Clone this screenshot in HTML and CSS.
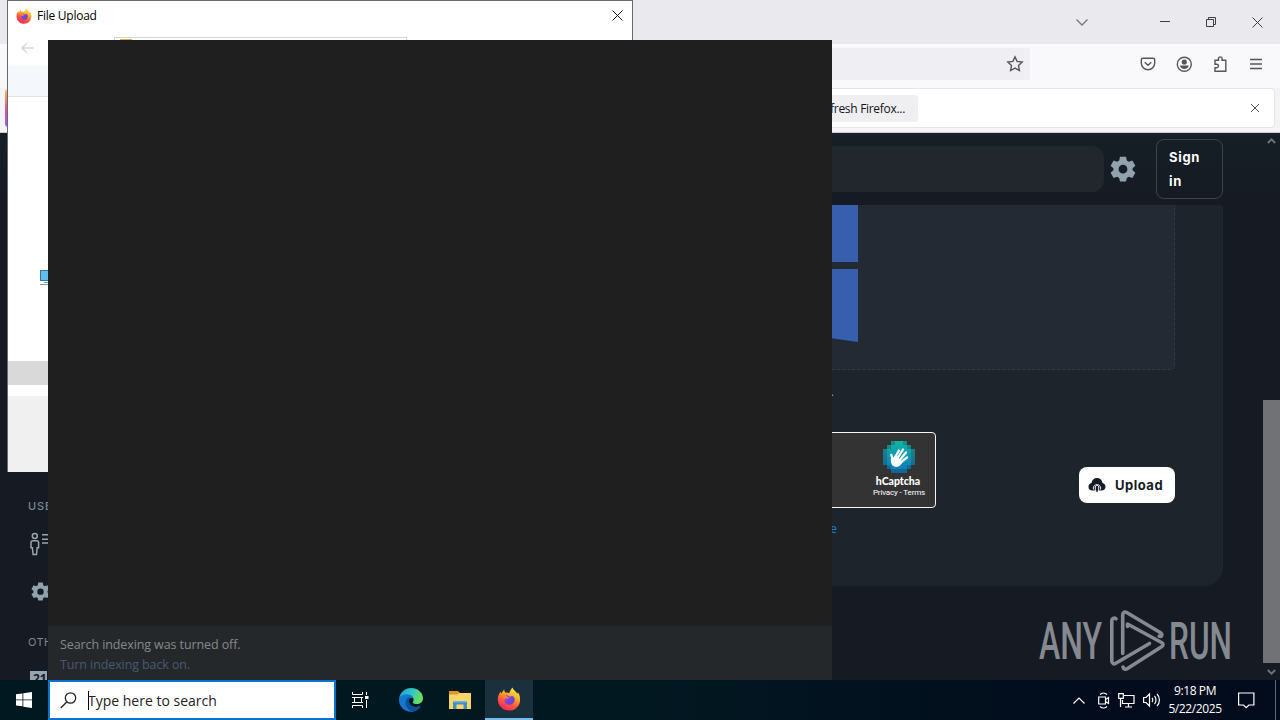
FILE: index.html
```html
<!DOCTYPE html>
<html lang="en">
<head>
  <meta charset="UTF-8">
  <meta name="viewport" content="width=device-width, initial-scale=1.0">
  <title>File Upload</title>
  <link rel="stylesheet" href="styles.css">
</head>
<body>
  <!-- shared shapes -->
  <svg class="defs" width="0" height="0">
    <defs>
      <linearGradient id="fx-body" x1=".8" y1="0" x2=".3" y2="1">
        <stop offset="0" stop-color="#fff04a"/><stop offset=".35" stop-color="#ffb02c"/>
        <stop offset=".65" stop-color="#ff5a35"/><stop offset="1" stop-color="#f0246c"/>
      </linearGradient>
      <linearGradient id="fx-globe" x1="0" y1="0" x2="1" y2="1">
        <stop offset="0" stop-color="#a347ea"/><stop offset="1" stop-color="#5145c8"/>
      </linearGradient>
      <linearGradient id="edge-top" x1="0" y1="0" x2="1" y2=".3">
        <stop offset="0" stop-color="#1f9bdc"/><stop offset=".55" stop-color="#2fc5c8"/><stop offset="1" stop-color="#6be05c"/>
      </linearGradient>
      <linearGradient id="captcha" x1="0" y1="0" x2="0" y2="1">
        <stop offset="0" stop-color="#10b5a2"/><stop offset="1" stop-color="#0877c3"/>
      </linearGradient>
      <symbol id="firefox" viewBox="0 0 24 24">
        <path fill="url(#fx-body)" d="M15.500.6c.5 1.500 1.400 2.600 2.600 3.500 1 .8 1.700 1.800 2 2.700l1-1.200c1.300 2 2 4.300 2 6.800C23.100 19 18.300 23.600 12 23.600S.8 18.700.8 12.300c0-3.100 1.100-5.600 2.800-7.600l.6 1.900 2.900-4 .9 3c1.500-.4 3-.2 4.200.6.9-2 1.700-4 3.300-5.600z"/>
        <path fill="url(#fx-globe)" d="M8.200 8.400c2-.4 3.600.3 4.700 1.400 1.800-1.200 2.700-1 4.200.4 1.500 3.300-.4 7.600-4.400 7.600-3.700 0-5.800-3-4.900-5.900.7-.4 2.400-.2 3.500-.6l1-1c-1.500-.1-2.500-1.300-4.100-1.900z"/>
      </symbol>
      <symbol id="gear" viewBox="0 0 26 26">
        <path fill="#91a1ae" fill-rule="evenodd" d="M10 .8h6l.8 3.700 2 1.200 3.600-1.200 3 5.200-2.800 2.500v2l2.800 2.500-3 5.200-3.600-1.200-2 1.200-.8 3.500h-6l-.8-3.500-2-1.200-3.600 1.200-3-5.200 2.800-2.500v-2L.6 9.700l3-5.200 3.600 1.200 2-1.200zM13 8.800a4.400 4.400 0 1 0 0 8.800 4.400 4.400 0 0 0 0-8.800z"/>
      </symbol>
    </defs>
  </svg>

  <div class="desktop">
    <div class="browser">
      <div class="titlebar">
        <svg class="tabs-arrow" width="12" height="8"><path d="M.5 1.500 6 7l5.500-5.500"/></svg>
        <svg class="min" width="10" height="10"><path d="M0 4.500h10"/></svg>
        <svg class="restore" width="10" height="10"><path d="M.5 2.500h7v7h-7zM2.500 2.500v-2h7v7h-2"/></svg>
        <svg class="close" width="11" height="11"><path d="M.5.5l10 10M10.500.5l-10 10"/></svg>
      </div>
      <div class="toolbar">
        <div class="urlbar">
          <svg width="16" height="16"><path d="M8 .9 10.100 5.400 15.200 6 11.500 9.500l.9 5L8 12.100l-4.400 2.400.9-5L.8 6l5.100-.6z"/></svg>
        </div>
        <svg width="16" height="16"><path d="M3 2.200h10c1 0 1.700.7 1.700 1.700V7c0 3.700-3 6.700-6.700 6.700S1.300 10.700 1.300 7V3.900c0-1 .7-1.700 1.700-1.700zM4.700 6.200 8 9.300l3.300-3.100"/></svg>
        <svg width="16" height="16"><circle cx="8.300" cy="8.300" r="7"/><circle class="solid" cx="8.300" cy="6" r="2.600"/><path class="solid" d="M3.900 9.500h8.800c-.3 2.300-2.200 3.500-4.400 3.500s-4.100-1.200-4.400-3.500z"/></svg>
        <svg width="16" height="16"><path d="M3 4.300h3.500V2.600c0-2.300 3.600-2.300 3.600 0v1.700h3.700v10.900H3v-3.400h1.700c2.300 0 2.300-3.500 0-3.500H3z"/></svg>
        <svg width="16" height="16"><path d="M2 3.500h12M2 8h12M2 12.500h12"/></svg>
      </div>
      <div class="infobar">
        <div class="notice">
          <button class="refresh">Refresh Firefox...</button>
          <svg width="8" height="8"><path d="M0 0l8 8M8 0 0 8"/></svg>
        </div>
      </div>

      <div class="page">
        <nav class="sidebar">
          <span class="group">USE</span>
          <svg width="22" height="24"><circle cx="6.800" cy="4" r="2.500"/><path d="M5 8.800h3.600c1.400 0 2 .9 2 2v5H9.200L8.500 22.500H5.100l-.7-6.700H3v-5c0-1.100.6-2 2-2zM14 2.700h8M14 7.200h8M14 11h8"/></svg>
          <svg class="side-gear" width="19" height="19"><use href="#gear"/></svg>
          <span class="group other">OTH</span>
          <span class="badge">21</span>
        </nav>
        <main class="main">
          <header class="site-header">
            <div class="site-search"></div>
            <svg width="26" height="26"><use href="#gear"/></svg>
            <button class="sign-in">Sign<br>in</button>
          </header>
          <section class="panel">
            <div class="dropzone">
              <svg width="118" height="138"><path fill="#385fae" d="M0 0h118v57H0zM0 64h118v73L0 120z"/></svg>
            </div>
            <div class="form-row">
              <div class="fields">
                <p class="hint">.</p>
                <div class="captcha">
                  <div class="captcha-brand">
                    <svg width="32" height="32" shape-rendering="crispEdges">
                      <path fill="url(#captcha)" d="M8 0h16v4h4v4h4v16h-4v4h-4v4H8v-4H4v-4H0V8h4V4h4z"/>
                      <path fill="#333" opacity=".3" d="M0 8h4v16H0zM4 4h4v4H4zM8 0h4v4H8zM20 0h4v4h-4zM24 4h4v4h-4zM28 8h4v16h-4zM24 24h4v4h-4zM8 28h16v4H8zM4 24h4v4H4z"/>
                      <path shape-rendering="auto" fill="none" stroke="#fff" stroke-width="2.300" stroke-linecap="round" d="M9.500 18 8.300 13.800M11.500 17l4.500-7.500M14 18l6-9.500M16 20l7-8.500M17 22l7-5.500"/>
                      <path shape-rendering="auto" fill="#fff" d="M8 15.500l3 1 3-2 5.500 7-2.500 3c-2.500 2.200-6 1.800-8-.7-1.500-2.100-1.200-5.300-1-8.300z"/>
                    </svg>
                    <b>hCaptcha</b>
                    <small>Privacy - Terms</small>
                  </div>
                </div>
                <a class="more">e</a>
              </div>
              <button class="upload">
                <svg width="18" height="16"><path fill="#141c26" d="M4.500 13.500C2 13.500.5 11.900.5 9.800c0-2 1.300-3.400 3-3.700C3.800 3 6 1 9 1s5.200 2 5.500 5.100c1.700.3 3 1.700 3 3.700 0 2.100-1.500 3.700-4 3.700z"/><path stroke="#fff" stroke-width=".9" d="M5.500 12.500c-1.500-6.500 8.500-6.500 7 0M7.300 14V9.500M10.700 14V9.500"/><path stroke="#141c26" stroke-width="1.300" d="M9 8.500V15"/><path stroke="#fff" stroke-width=".8" d="M6.800 10.200 9 8l2.200 2.200"/></svg>
                Upload
              </button>
            </div>
          </section>
        </main>
        <div class="scrollbar">
          <svg width="9" height="6"><path d="M.8 5 4.500 1.300 8.200 5"/></svg>
          <i class="thumb"></i>
          <svg width="9" height="6"><path d="M.8 1 4.500 4.700 8.200 1"/></svg>
        </div>
      </div>
    </div>

    <div class="dialog">
      <div class="dialog-title">
        <svg width="16" height="16"><use href="#firefox"/></svg>
        <span>File Upload</span>
        <svg class="dialog-close" width="11" height="11"><path d="M.5.5l10 10M10.500.5l-10 10"/></svg>
      </div>
      <div class="dialog-nav">
        <svg width="13" height="10"><path d="M12.500 5H1M5.500.5 1 5l4.500 4.500"/></svg>
        <div class="address"><i></i></div>
      </div>
      <div class="dialog-commands"></div>
      <div class="dialog-tree">
        <svg width="20" height="16"><path fill="#3b7391" d="M0 0h20v11H0z"/><path fill="#5fbdf0" d="M1 1h18v9H1z"/><path fill="#48a8d8" d="M4 12h12v1H4z"/><path fill="#8a939a" d="M0 14h20v1H0z"/></svg>
      </div>
      <div class="dialog-row"></div>
      <div class="dialog-footer"></div>
    </div>

    <div class="flyout">
      <footer class="flyout-footer">
        <p>Search indexing was turned off.</p>
        <a>Turn indexing back on.</a>
      </footer>
    </div>

    <svg class="watermark" width="196" height="64" viewBox="0 0 196 64">
      <text x="3" y="50" textLength="63" lengthAdjust="spacingAndGlyphs">ANY</text>
      <text x="133" y="50" textLength="63" lengthAdjust="spacingAndGlyphs">RUN</text>
      <path d="M80 9.800c-2-1.500-4.200-.5-4.200 2V52c0 2.500 2 3.500 4 2.300L113.500 34.500"/>
      <path d="M86.700 44.500V6c0-2.700 2-3.700 4-2.500l33.500 20c2.500 1.500 2 5-1 3.700"/>
      <path d="M91.500 17.500V15l34 18.500c2 1.200 2 3 0 4.200L91.500 59.500c-2 1.200-4 .5-4.500-1.500"/>
    </svg>

    <div class="taskbar">
      <div class="start">
        <svg width="16" height="16"><path fill="#fff" d="M0 2.300 6.500 1.400v6H0zM7.300 1.300 16 0v7.400H7.300zM0 8.300h6.500v6L0 13.500zM7.300 8.300H16V16l-8.700-1.300z"/></svg>
      </div>
      <div class="searchbox">
        <svg width="17" height="17"><circle cx="10.500" cy="6" r="5.200"/><path d="M6.700 10 .7 16"/></svg>
        <i class="caret"></i>
        <span>Type here to search</span>
      </div>
      <div class="task view">
        <svg width="17" height="16"><path d="M.5 0v2.500h10V0M.5 16v-2.500h10V16M2.500 5.500h7v5h-7zM0 5.500h11M0 10.500h11M14.500 0v3M14.500 8v8"/><path class="fill" d="M13 4h3.500v3H13z"/></svg>
      </div>
      <div class="task">
        <svg width="24" height="24">
          <path fill="#1478d0" d="M0 12C0 9 2.500 5.800 7.500 5.800c4 0 6.500 2 7 4.500-3-1-5.500 1-4.500 4.500 1 3.700 6 6 11.800 3-2 3.700-5.600 6-9.800 6C5.300 23.800 0 18.500 0 12z"/>
          <path fill="url(#edge-top)" d="M.2 10.500C1 4.500 6 .1 12 .1c7 0 12 5 12 10 0 4-3 6-6.200 6-3.500 0-4.600-1.300-3.600-2.600 1.500-3.500-1.200-7.200-6.200-7.200-3.800 0-6.800 2-7.800 4.200z"/>
          <path fill="#0c4f9c" d="M9.500 9.200C4 13 6.500 21.500 13.500 23.600c3.500-.4 6.500-2.600 8.300-5.800-5 2.500-10.500.5-11.700-3.300-.6-2 0-3.500 1.400-4.700-.7-.5-1.300-.7-2-.6z"/>
        </svg>
      </div>
      <div class="task">
        <svg width="22" height="18"><path fill="#d99a22" d="M0 0h9l2 2h10v5H0z"/><path fill="#fbd568" d="M0 3.500h8.500l2-1.500H22v16H0z"/><path fill="#3f8fc9" d="M4 10h14v8h-3.500v-4.500h-7V18H4z"/><path fill="#66b5e4" d="M4 10h14v1.500H4z"/></svg>
      </div>
      <div class="task active">
        <svg width="24" height="24"><use href="#firefox"/></svg>
      </div>
      <div class="tray">
        <svg width="12" height="7"><path d="M.5 6.500 6 1l5.500 5.500"/></svg>
        <svg width="12" height="17"><path d="M2 2.500c2-2 5-2 7 0M2 14.500c2 2 5 2 7 0M.7 5h6.800v7H.7zM7.500 7.500 10.500 5.500v6l-3-2"/></svg>
        <svg width="17" height="15"><path d="M6 2.500h10v8H4.500V7M10.500 10.500V14M7 14h7M.7.700h4.600v4.600H.7zM2.500 5.300V14"/></svg>
        <svg width="17" height="14"><path d="M.6 4.500H3L6.500 1v12L3 9.500H.6zM9 5c1 1 1 3 0 4M11.500 3c2 2 2 6 0 8M14 1c3.200 3 3.200 9 0 12"/></svg>
        <div class="clock"><span>9:18 PM</span><span>5/22/2025</span></div>
        <svg class="action" width="17" height="17"><path d="M.6 1h15.300v12h-5L8.200 15.700 5.500 13H.6z"/></svg>
        <i class="peek"></i>
      </div>
    </div>
  </div>
</body>
</html>
```
FILE: styles.css
```css
* { box-sizing:border-box }
html, body { margin:0;padding:0;height:100%;width:100%;overflow:hidden }
body { font-family:"Open Sans", "Noto Sans", sans-serif;font-size:12px }
button { border:0;font:inherit;margin:0 }
svg { display:block;fill:none;flex:none;overflow:visible }
p { margin:0 }
.defs { position:absolute }
.desktop { display:flex;flex-direction:column;height:720px;position:relative;width:1280px;overflow:hidden }

/* browser */
.browser { display:flex;flex-direction:column;height:680px }
.titlebar { align-items:center;background:#eae9ee;display:flex;height:44px;justify-content:flex-end;padding-right:17px }
.titlebar svg { stroke:#3f3e46 }
.titlebar .tabs-arrow { margin-right:72px;stroke:#77767d;stroke-width:1.300 }
.titlebar .restore { margin-left:36px }
.titlebar .close { margin-left:36px }
.toolbar { align-items:center;background:#f9f9fb;display:flex;height:44px;gap:20px;padding:0 16px 4px 0 }
.toolbar svg { stroke:#56555d;stroke-width:1.400 }
.toolbar .solid { fill:#56555d;stroke:none }
.urlbar { align-items:center;background:#efeef3;display:flex;height:32px;justify-content:flex-end;margin:0 90px 0 120px;padding-right:7px;flex:1 }
.infobar { background:#f4f4f6;border-bottom:1px solid #c9ced0;height:45px;padding:0 5px 5px }
.notice { align-items:center;background:linear-gradient(#ffbd4f,#e6558f,#9059ff) left / 4px 100% no-repeat #fff;border:1px solid #e6e6e9;border-left:0;border-radius:4px;display:flex;height:40px;justify-content:space-between;padding:0 15px 0 780px }
.notice svg { stroke:#55545b }
.refresh { background:#efeff1;border-radius:4px;color:#15141a;height:27px;letter-spacing:-.3px;padding:0 13px 0 0;text-align:right;width:133px;white-space:nowrap }

/* page */
.page { background:linear-gradient(#161f26,#161a23 70px);display:flex;flex:1;min-height:0 }
.sidebar { color:#7d8790;display:flex;flex-direction:column;padding:367px 0 0 28px;width:260px }
.sidebar svg { stroke:#9aa5af;stroke-width:1.500 }
.group { font:500 11px/13px Inter, sans-serif;letter-spacing:.9px;margin-bottom:19px }
.sidebar .side-gear { margin:26px 0 0 2.500px;stroke:none }
.group.other { font-weight:400;letter-spacing:.4px;margin:35px 0 22px }
.badge { background:#96a3b2;color:#161a23;font:bold 12px/15px "Open Sans", sans-serif;height:9px;margin-left:2px;padding-left:3px;width:17px }
.main { flex:1;padding-right:40px }
.site-header { align-items:center;display:flex;height:72px }
.site-search { background:#22272e;border-radius:12px;flex:1;height:46px;margin-right:6px }
.sign-in { background:none;border:1px solid #3c444d;border-radius:8px;color:#fff;font:bold 13px/24px Inter, sans-serif;height:60px;letter-spacing:.7px;margin-left:20px;padding:0 0 0 12px;text-align:left;width:67px }
.panel { background:#1e242b;border-radius:0 4px 20px 0;border-right:1px solid #22272e;height:381px;padding:0 47px 0 48px }
.dropzone { background:#242a34;border:1px dashed #343a43;border-top:0;border-radius:0 0 5px 5px;height:165px;padding-left:431px }
.form-row { align-items:flex-start;display:flex;justify-content:space-between }
.fields { text-align:right;width:628px }
.hint { color:#96a3b2;height:62px;line-height:44px;padding-right:102px }
.captcha { background:#333;border:1px solid #f5f5f5;border-radius:4px;color:#fff;display:flex;height:76px;justify-content:flex-end;margin-left:326px;padding:8px 10px }
.captcha-brand { align-items:center;display:flex;flex-direction:column;width:52px }
.captcha-brand svg { margin-right:1px }
.captcha-brand b { font:900 10.500px/14px Lato, sans-serif;margin:1px 2px 0 0 }
.captcha-brand small { font:8px/10px Roboto, sans-serif;letter-spacing:-.15px;white-space:nowrap }
.more { color:#1683d0;display:block;line-height:41px;padding-right:99px }
.upload { align-items:center;background:#fff;border-radius:8px;color:#141c26;display:flex;font:bold 13px Inter, sans-serif;gap:9px;height:36px;letter-spacing:.5px;margin-top:97px;padding:0 9px;width:96px }
.scrollbar { align-items:center;display:flex;flex-direction:column;padding:5px 0;width:17px }
.scrollbar svg { stroke:#6d7175;stroke-width:2 }
.thumb { background:#707276;height:263px;margin:auto 0 6px;width:17px }

/* upload dialog */
.dialog { background:#fff;border:1px solid #6b696d;border-bottom:0;display:flex;flex-direction:column;height:472px;left:7px;position:absolute;top:0;width:626px }
.dialog-title { align-items:center;color:#000;display:flex;gap:5px;height:29px;padding:0 9px 0 8px }
.dialog-title span { font-size:12px;letter-spacing:-.25px }
.dialog-close { margin-left:auto;stroke:#111 }
.dialog-nav { display:flex;height:36px;padding:7px 0 0 13px }
.dialog-nav svg { margin-top:6px;stroke:#d5d5d5;stroke-width:1.300 }
.address { border:1px solid #d5d5d5;height:24px;margin-left:80px;width:293px }
.address i { background:#e5ac39;display:block;height:2px;margin:1px 0 0 5px;width:12px }
.dialog-commands { background:#f4f7fb;border-bottom:1px solid #e0e4e8;height:31px }
.dialog-tree { flex:1;padding:173px 0 0 32px }
.dialog-row { background:#d9d9d9;height:24px;margin-bottom:11px }
.dialog-footer { background:#f0f0f0;height:76px }

/* start menu search */
.flyout { background:#1f1f1f;display:flex;flex-direction:column;height:640px;justify-content:flex-end;left:48px;position:absolute;top:40px;width:784px }
.flyout-footer { background:#25282a;color:#85888a;font-size:12.500px;height:54px;letter-spacing:-.1px;line-height:20px;padding:9px 12px 0 }
.flyout-footer a { color:#465a70 }
.watermark { left:1036px;position:absolute;top:609px;fill:none;stroke:#858990;stroke-width:3.600;stroke-linecap:round;stroke-linejoin:round }
.watermark text { fill:#858990;font:500 52px Roboto, sans-serif;stroke:none }

/* taskbar */
.taskbar { background:linear-gradient(90deg,#021821 50%,#020c1c 85%);color:#fff;display:flex;height:40px;position:relative }
.start { display:flex;align-items:center;justify-content:center;width:48px }
.searchbox { align-items:center;background:#fff;border:2px solid #0874ce;color:#222;display:flex;font-size:14px;padding-left:10px;width:288px }
.searchbox svg { stroke:#222;stroke-width:1.300 }
.searchbox span { margin-left:-1px }
.caret { background:#000;height:19px;margin-left:11px;width:1px }
.task { align-items:center;display:flex;justify-content:center;width:49px }
.task.view { margin-right:1px }
.task.view svg { stroke:#fff }
.task.view .fill { fill:#fff;stroke:none }
.task.active { background:#1a303c;border-bottom:2px solid #76b9ed;margin-left:1px;width:48px }
.tray { align-items:center;display:flex;gap:8px;margin-left:auto }
.tray svg { stroke:#fff;stroke-width:1.200 }
.tray > svg:first-child { margin-right:5px }
.clock { display:flex;flex-direction:column;font-size:12px;letter-spacing:-.4px;line-height:18px;text-align:center;width:54px }
.tray .action { margin-left:8px }
.peek { border-left:1px solid #5d6675;height:40px;margin-left:12px;width:5px }
```
